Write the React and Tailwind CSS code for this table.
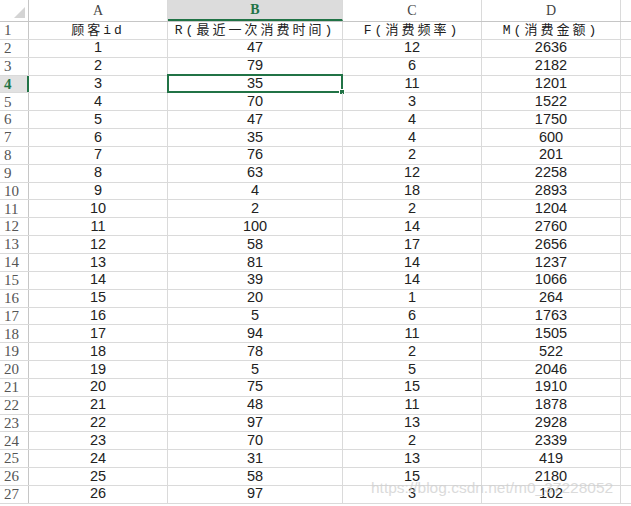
import React from "react";

const rows = [
  [1, 47, 12, 2636],
  [2, 79, 6, 2182],
  [3, 35, 11, 1201],
  [4, 70, 3, 1522],
  [5, 47, 4, 1750],
  [6, 35, 4, 600],
  [7, 76, 2, 201],
  [8, 63, 12, 2258],
  [9, 4, 18, 2893],
  [10, 2, 2, 1204],
  [11, 100, 14, 2760],
  [12, 58, 17, 2656],
  [13, 81, 14, 1237],
  [14, 39, 14, 1066],
  [15, 20, 1, 264],
  [16, 5, 6, 1763],
  [17, 94, 11, 1505],
  [18, 78, 2, 522],
  [19, 5, 5, 2046],
  [20, 75, 15, 1910],
  [21, 48, 11, 1878],
  [22, 97, 13, 2928],
  [23, 70, 2, 2339],
  [24, 31, 13, 419],
  [25, 58, 15, 2180],
  [26, 97, 3, 102],
];

const widths = ["w-[139px]", "w-[175px]", "w-[139px]", "w-[139px]"];
const cjk = { fontFamily: '"Liberation Mono", "Noto Sans CJK SC", monospace' };
const serif = { fontFamily: '"Liberation Serif", "DejaVu Serif", serif' };
const sans = { fontFamily: '"Liberation Sans", Arial, sans-serif' };

function RowHead({ n, active }) {
  return (
    <div
      className={
        "w-[29px] shrink-0 flex items-center pl-[4px] text-[15px] " +
        (active
          ? "bg-[#e2e2e2] border-r-2 border-[#217346] text-[#217346] font-bold"
          : "border-r border-[#c6c6c6] text-[#555]")
      }
      style={serif}
    >
      {n}
    </div>
  );
}

function Row({ n, cells, header, selCol }) {
  return (
    <div className="flex h-[17.85px] border-b border-[#dadada]">
      <RowHead n={n} active={n === 4} />
      {cells.map((c, i) => (
        <div
          key={i}
          className={
            widths[i] +
            " shrink-0 relative flex items-center justify-center border-r border-[#dadada] text-[#222] " +
            (header ? "text-[13px] tracking-[3px]" : "text-[14.5px]")
          }
          style={header ? cjk : sans}
        >
          {c}
          {selCol === i && (
            <div className="absolute -left-px -top-[2px] -right-px -bottom-px border-2 border-[#217346]">
              <div className="absolute -right-[4px] -bottom-[4px] w-[6px] h-[6px] bg-[#217346] border border-white" />
            </div>
          )}
        </div>
      ))}
      <div className="flex-1" />
    </div>
  );
}

export default function App() {
  const letters = ["A", "B", "C", "D"];
  return (
    <div className="relative w-[631px] h-[506px] overflow-hidden bg-white select-none">
      <div className="flex h-[22px] border-b border-[#c6c6c6]">
        <div className="w-[29px] shrink-0 border-r border-[#c6c6c6] relative">
          <div className="absolute right-[3px] bottom-[3px] w-0 h-0 border-l-[11px] border-l-transparent border-b-[11px] border-b-[#d4d4d4]" />
        </div>
        {letters.map((l, i) => (
          <div
            key={l}
            className={
              widths[i] +
              " shrink-0 flex items-center justify-center text-[14px] border-r border-[#dadada] " +
              (i === 1
                ? "bg-[#dcdcdc] text-[#217346] font-bold border-b-2 border-b-[#217346]"
                : "text-[#444]")
            }
            style={serif}
          >
            {l}
          </div>
        ))}
        <div className="flex-1" />
      </div>
      <Row
        n={1}
        header
        cells={["顾客id", "R(最近一次消费时间)", "F(消费频率)", "M(消费金额)"]}
      />
      {rows.map((r, i) => (
        <Row key={i} n={i + 2} cells={r} selCol={i === 2 ? 1 : undefined} />
      ))}
      <div
        className="absolute left-[371px] top-[479px] text-[15.5px] leading-[18px] text-[#cfcfcf] opacity-75 pointer-events-none"
        style={sans}
      >
        https://blog.csdn.net/m0_37228052
      </div>
    </div>
  );
}
